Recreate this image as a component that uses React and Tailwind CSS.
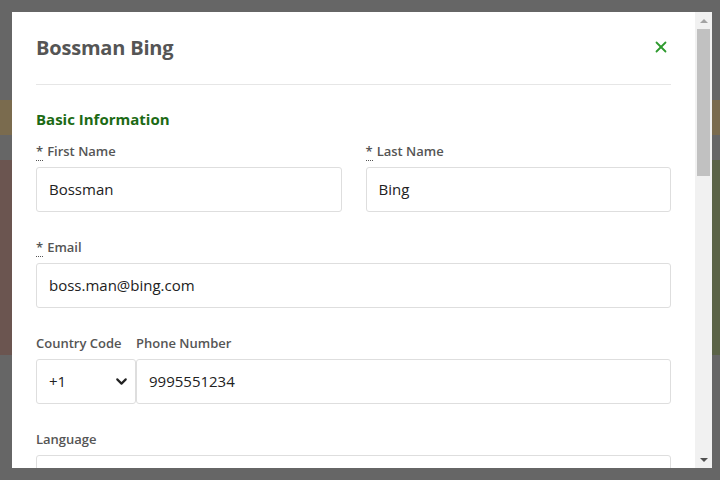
import { X, ChevronDown } from "lucide-react";

const font = { fontFamily: '"Open Sans", "Noto Sans", sans-serif' };

function Label({ children, required }) {
  return (
    <label className="block h-[18px] text-[13px] leading-[18px] font-semibold text-[#555]">
      {required && (
        <abbr title="required" className="no-underline border-b border-dotted border-[#555] mr-1">
          *
        </abbr>
      )}
      {children}
    </label>
  );
}

function Field({ label, required, value, className = "" }) {
  return (
    <div className={className}>
      <Label required={required}>{label}</Label>
      <div className="mt-[7px] h-[45px] border border-[#dedede] rounded-[3px] px-3 flex items-center text-[15px] text-[#222]">
        {value}
      </div>
    </div>
  );
}

export default function App() {
  return (
    <div className="relative w-[720px] h-[480px] overflow-hidden bg-[#666]" style={font}>
      {/* page content dimmed behind the overlay */}
      <div className="pt-[100px]">
        <div className="h-[35px] bg-[#7a6b4e]" />
        <div className="mt-[25px] h-[195px] flex justify-between">
          <div className="w-[40px] bg-[#6b5550]" />
          <div className="w-[40px] bg-[#5b6347]" />
        </div>
      </div>

      {/* modal */}
      <div className="absolute left-[12px] top-[12px] w-[700px] h-[456px] bg-white flex overflow-hidden">
        <div className="flex-1 px-6">
          <div className="h-[73px] border-b border-[#e6e6e6] flex items-center justify-between">
            <h2 className="text-[20px] font-bold text-[#555] leading-7 tracking-[-0.2px]">Bossman Bing</h2>
            <X size={18} strokeWidth={2.4} className="text-[#2e9a2e] mr-px -mt-[3px]" />
          </div>

          <h3 className="mt-6 text-[15px] leading-5 font-bold text-[#1c6a14]">Basic Information</h3>

          <div className="mt-[13px] grid grid-cols-2 gap-x-6">
            <Field label="First Name" required value="Bossman" />
            <Field label="Last Name" required value="Bing" />
          </div>

          <Field className="mt-[26px]" label="Email" required value="boss.man@bing.com" />

          <div className="mt-[26px] flex">
            <div className="w-[100px] shrink-0">
              <Label>Country Code</Label>
              <div className="mt-[7px] h-[45px] border border-[#dedede] rounded-[3px] pl-3 pr-[5px] flex items-center justify-between text-[15px] text-[#222]">
                <span>+1</span>
                <ChevronDown size={17} strokeWidth={3} className="text-[#222]" />
              </div>
            </div>
            <Field className="flex-1" label="Phone Number" value="9995551234" />
          </div>

          <Field className="mt-[26px]" label="Language" value="" />
        </div>

        {/* scrollbar */}
        <div className="w-[17px] bg-[#f1f1f1] flex flex-col items-center">
          <div className="h-[17px] flex items-center justify-center">
            <div className="w-0 h-0 border-l-4 border-r-4 border-b-4 border-l-transparent border-r-transparent border-b-[#a3a3a3]" />
          </div>
          <div className="w-[13px] h-[147px] bg-[#c1c1c1]" />
          <div className="flex-1" />
          <div className="h-[17px] flex items-center justify-center">
            <div className="w-0 h-0 border-l-4 border-r-4 border-t-4 border-l-transparent border-r-transparent border-t-[#505050]" />
          </div>
        </div>
      </div>
    </div>
  );
}
